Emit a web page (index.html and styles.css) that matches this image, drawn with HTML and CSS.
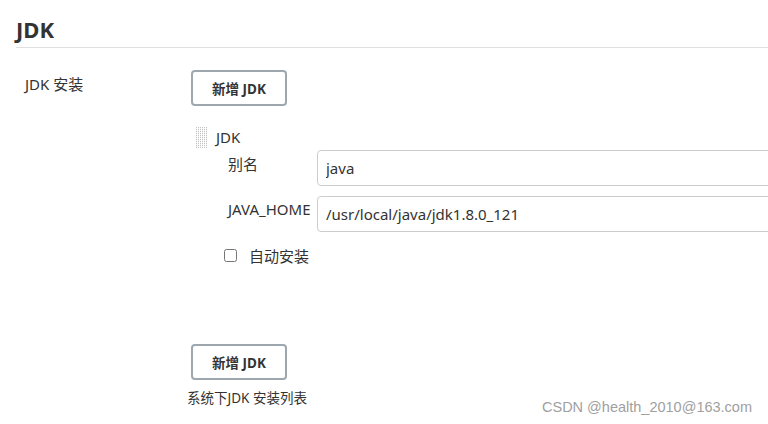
FILE: index.html
```html
<!DOCTYPE html>
<html lang="zh-CN">
<head>
    <meta charset="UTF-8">
    <meta name="viewport" content="width=device-width, initial-scale=1.0">
    <title>JDK</title>
    <link rel="stylesheet" href="styles.css">
</head>
<body>
    <h1 class="section-title">JDK</h1>

    <div class="setting">
        <div class="setting-name">JDK 安装</div>
        <div class="setting-main">
            <button class="btn">新增 JDK</button>

            <div class="chunk">
                <div class="chunk-head">
                    <span class="grip"></span>
                    <span class="chunk-title">JDK</span>
                </div>
                <div class="field">
                    <label class="field-label">别名</label>
                    <input class="field-input" type="text" value="java">
                </div>
                <div class="field">
                    <label class="field-label">JAVA_HOME</label>
                    <input class="field-input" type="text" value="/usr/local/java/jdk1.8.0_121">
                </div>
                <label class="check">
                    <input type="checkbox">
                    <span>自动安装</span>
                </label>
            </div>

            <button class="btn btn-bottom">新增 JDK</button>
            <div class="help">系统下JDK 安装列表</div>
        </div>
    </div>

    <div class="watermark">CSDN @health_2010@163.com</div>
</body>
</html>
```

FILE: styles.css
```css
body {
    margin: 0;
    font-family: "Noto Sans", "Noto Sans CJK SC", sans-serif;
    font-size: 15px;
    color: #333;
    background: #fff;
}
.section-title {
    margin: 15px 0 0 16px;
    padding-bottom: 4px;
    font-size: 22px;
    font-weight: bold;
    line-height: 28px;
    color: #333;
    border-bottom: 1px solid #e0e0e0;
}
.setting {
    display: flex;
    margin-top: 22px;
}
.setting-name {
    width: 166px;
    padding-left: 25px;
    padding-top: 3px;
    flex-shrink: 0;
}
.setting-main {
    flex: 1;
}
.btn {
    display: block;
    width: 96px;
    height: 36px;
    padding: 0;
    font-family: inherit;
    font-size: 13.5px;
    font-weight: bold;
    color: #333;
    background: #fff;
    border: 2px solid #9ea7ae;
    border-radius: 4px;
    cursor: pointer;
}
.chunk {
    margin-top: 20px;
    padding-left: 5px;
}
.chunk-head {
    display: flex;
    align-items: center;
    height: 22px;
}
.grip {
    width: 11px;
    height: 21px;
    margin-right: 9px;
    background-color: #f2f2f2;
    background-image:
        linear-gradient(to right, transparent 1px, #fff 1px),
        linear-gradient(#c4c4c4 1px, transparent 1px);
    background-size: 2px 2px;
}
.field {
    display: flex;
    align-items: flex-start;
    margin-left: 32px;
    margin-top: 2px;
}
.field + .field {
    margin-top: 10px;
}
.field-label {
    width: 89px;
    padding-top: 3px;
    flex-shrink: 0;
}
.field-input {
    flex: 1;
    height: 36px;
    box-sizing: border-box;
    margin-right: -10px;
    padding: 0 8px;
    font-family: inherit;
    font-size: 15px;
    color: #333;
    border: 1px solid #ccc;
    border-radius: 4px;
}
.check {
    display: flex;
    align-items: center;
    gap: 12px;
    margin: 13px 0 0 28px;
}
.check input {
    margin: 0;
    width: 13px;
    height: 13px;
}
.btn-bottom {
    margin-top: 78px;
}
.help {
    margin: 7px 0 0 -4px;
    font-size: 13.5px;
}
.watermark {
    position: absolute;
    left: 542px;
    top: 399px;
    font-family: "Liberation Sans", sans-serif;
    font-size: 14.5px;
    color: #a0a0a0;
}
```
